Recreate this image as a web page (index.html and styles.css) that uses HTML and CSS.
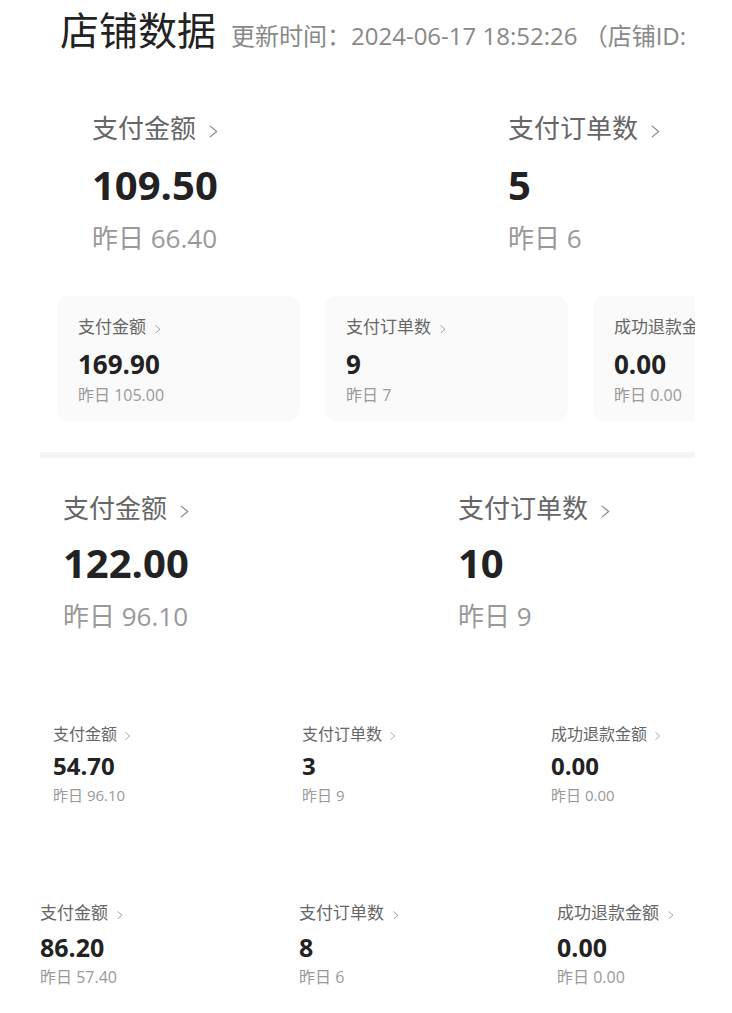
FILE: index.html
```html
<!DOCTYPE html>
<html lang="zh-CN">
<head>
<meta charset="utf-8">
<title>店铺数据</title>
<link rel="stylesheet" href="styles.css">
</head>
<body>
<div class="page">
  <header class="header">
    <h1 class="title">店铺数据</h1>
    <span class="subtitle">更新时间：2024-06-17 18:52:26 （店铺ID:</span>
  </header>

  <section class="hero hero-a">
    <div class="stat">
      <div class="label">支付金额<svg class="chev" viewBox="0 0 8 12"><path d="M1 1 L7 6 L1 11"/></svg></div>
      <div class="value">109.50</div>
      <div class="yest">昨日 66.40</div>
    </div>
    <div class="stat">
      <div class="label">支付订单数<svg class="chev" viewBox="0 0 8 12"><path d="M1 1 L7 6 L1 11"/></svg></div>
      <div class="value">5</div>
      <div class="yest">昨日 6</div>
    </div>
  </section>

  <section class="cards">
    <div class="card">
      <div class="c-label">支付金额<svg class="chev" viewBox="0 0 8 12"><path d="M1 1 L7 6 L1 11"/></svg></div>
      <div class="c-value">169.90</div>
      <div class="c-yest">昨日 105.00</div>
    </div>
    <div class="card">
      <div class="c-label">支付订单数<svg class="chev" viewBox="0 0 8 12"><path d="M1 1 L7 6 L1 11"/></svg></div>
      <div class="c-value">9</div>
      <div class="c-yest">昨日 7</div>
    </div>
    <div class="card">
      <div class="c-label">成功退款金额<svg class="chev" viewBox="0 0 8 12"><path d="M1 1 L7 6 L1 11"/></svg></div>
      <div class="c-value">0.00</div>
      <div class="c-yest">昨日 0.00</div>
    </div>
  </section>

  <div class="divider"></div>

  <section class="hero hero-b">
    <div class="stat">
      <div class="label">支付金额<svg class="chev" viewBox="0 0 8 12"><path d="M1 1 L7 6 L1 11"/></svg></div>
      <div class="value">122.00</div>
      <div class="yest">昨日 96.10</div>
    </div>
    <div class="stat">
      <div class="label">支付订单数<svg class="chev" viewBox="0 0 8 12"><path d="M1 1 L7 6 L1 11"/></svg></div>
      <div class="value">10</div>
      <div class="yest">昨日 9</div>
    </div>
  </section>

  <section class="row row-a">
    <div class="mini">
      <div class="m-label">支付金额<svg class="chev" viewBox="0 0 8 12"><path d="M1 1 L7 6 L1 11"/></svg></div>
      <div class="m-value">54.70</div>
      <div class="m-yest">昨日 96.10</div>
    </div>
    <div class="mini">
      <div class="m-label">支付订单数<svg class="chev" viewBox="0 0 8 12"><path d="M1 1 L7 6 L1 11"/></svg></div>
      <div class="m-value">3</div>
      <div class="m-yest">昨日 9</div>
    </div>
    <div class="mini">
      <div class="m-label">成功退款金额<svg class="chev" viewBox="0 0 8 12"><path d="M1 1 L7 6 L1 11"/></svg></div>
      <div class="m-value">0.00</div>
      <div class="m-yest">昨日 0.00</div>
    </div>
  </section>

  <section class="row row-b">
    <div class="mini">
      <div class="m-label">支付金额<svg class="chev" viewBox="0 0 8 12"><path d="M1 1 L7 6 L1 11"/></svg></div>
      <div class="m-value">86.20</div>
      <div class="m-yest">昨日 57.40</div>
    </div>
    <div class="mini">
      <div class="m-label">支付订单数<svg class="chev" viewBox="0 0 8 12"><path d="M1 1 L7 6 L1 11"/></svg></div>
      <div class="m-value">8</div>
      <div class="m-yest">昨日 6</div>
    </div>
    <div class="mini">
      <div class="m-label">成功退款金额<svg class="chev" viewBox="0 0 8 12"><path d="M1 1 L7 6 L1 11"/></svg></div>
      <div class="m-value">0.00</div>
      <div class="m-yest">昨日 0.00</div>
    </div>
  </section>
</div>
</body>
</html>
```

FILE: styles.css
```css
* { box-sizing: border-box; }

html, body {
  margin: 0;
  padding: 0;
  background: #fff;
}

body {
  font-family: "Open Sans", "Noto Sans CJK SC", sans-serif;
  color: #222;
}

.page {
  width: 695px;
  padding-left: 40px;
}

.header {
  display: flex;
  align-items: baseline;
  gap: 15px;
  padding: 4px 0 0 20px;
  white-space: nowrap;
  overflow: hidden;
}

.title {
  margin: 0;
  font-size: 39px;
  line-height: 52px;
  font-weight: normal;
  color: #222;
}

.subtitle {
  font-size: 24px;
  line-height: 32px;
  color: #888;
}

.chev {
  display: inline-block;
  width: 0.34em;
  height: 0.5em;
  margin-left: 0.5em;
  vertical-align: 0;
}

.chev path {
  fill: none;
  stroke: #888;
  stroke-width: 1.1;
  stroke-linecap: round;
  stroke-linejoin: round;
}

/* big two-column stats */
.hero {
  display: grid;
}

.hero-a {
  grid-template-columns: 416px 1fr;
  padding-left: 52px;
  margin-top: 55px;
}

.hero-b {
  grid-template-columns: 395px 1fr;
  padding-left: 23px;
  margin-top: 33px;
}

.label {
  font-size: 26px;
  line-height: 34px;
  color: #666;
}

.value {
  font-size: 40px;
  line-height: 48px;
  font-weight: 700;
  color: #222;
  margin-top: 16px;
}

.hero-b .value {
  margin-top: 14px;
}

.yest {
  font-size: 26px;
  line-height: 34px;
  color: #999;
  margin-top: 12px;
}

/* cards */
.cards {
  display: flex;
  gap: 25px;
  padding-left: 17px;
  margin-top: 41px;
  overflow: hidden;
}

.card {
  flex: 0 0 243px;
  height: 125px;
  background: #fafafa;
  border-radius: 12px;
  padding: 19px 0 0 21px;
  white-space: nowrap;
}

.c-label {
  font-size: 17px;
  line-height: 24px;
  color: #666;
}

.c-value {
  font-size: 26px;
  line-height: 32px;
  font-weight: 700;
  color: #222;
  margin-top: 9px;
}

.c-yest {
  font-size: 16px;
  line-height: 22px;
  color: #999;
  margin-top: 4px;
}

.divider {
  height: 6px;
  background: #f5f5f5;
  margin-top: 31px;
}

/* small three-column rows */
.row {
  display: grid;
  white-space: nowrap;
}

.row-a {
  grid-template-columns: 249px 249px 1fr;
  padding-left: 13px;
  margin-top: 90px;
}

.row-b {
  grid-template-columns: 259px 258px 1fr;
  margin-top: 96px;
}

.m-label {
  font-size: 16px;
  line-height: 22px;
  color: #666;
}

.m-value {
  font-size: 24px;
  line-height: 30px;
  font-weight: 700;
  color: #222;
  margin-top: 6px;
}

.m-yest {
  font-size: 15px;
  line-height: 20px;
  color: #999;
  margin-top: 4px;
}

.row-b .m-label { font-size: 17px; line-height: 24px; }
.row-b .m-value { font-size: 25px; margin-top: 7px; }
.row-b .m-yest { font-size: 16px; line-height: 22px; margin-top: 4px; }
```
